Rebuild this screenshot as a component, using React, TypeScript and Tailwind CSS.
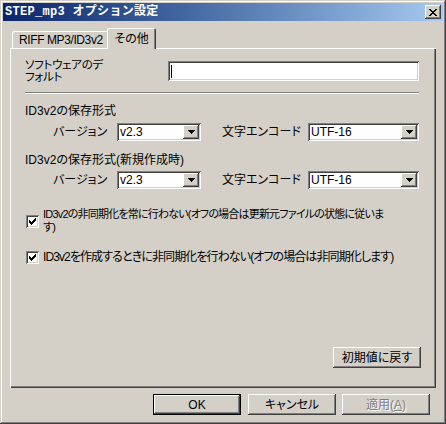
import React from "react";

// classic Win2000 bevels
const raised =
  "shadow-[inset_-1px_-1px_#404040,inset_1px_1px_#ffffff,inset_-2px_-2px_#808080,inset_2px_2px_#d4d0c8]";
const sunken =
  "shadow-[inset_1px_1px_#808080,inset_-1px_-1px_#ffffff,inset_2px_2px_#404040,inset_-2px_-2px_#d4d0c8]";

const CLOSE_X = [
  "##....##",
  ".##..##.",
  "..####..",
  "...##...",
  "..####..",
  ".##..##.",
  "##....##",
];
const ARROW = ["#######", ".#####.", "..###..", "...#..."];
const CHECK = [
  "......#",
  ".....##",
  "#...###",
  "##.###.",
  "#####..",
  ".###...",
  "..#....",
];

function Pixels({ rows, color = "#000" }: { rows: string[]; color?: string }) {
  const w = rows[0].length;
  const h = rows.length;
  return (
    <svg width={w} height={h} viewBox={`0 0 ${w} ${h}`} shapeRendering="crispEdges">
      {rows.map((row, y) =>
        row.split("").map((c, x) =>
          c === "#" ? <rect key={`${x}-${y}`} x={x} y={y} width={1} height={1} fill={color} /> : null
        )
      )}
    </svg>
  );
}

function Combo({ value, className }: { value: string; className: string }) {
  return (
    <div className={`relative h-[18px] bg-white ${sunken} ${className} flex items-center`}>
      <span className="pl-[3px]">{value}</span>
      <div
        className={`absolute right-[2px] top-[2px] w-[16px] h-[14px] bg-[#d4d0c8] ${raised} flex items-center justify-center`}
      >
        <Pixels rows={ARROW} />
      </div>
    </div>
  );
}

function Check({ children, textClass }: { children: React.ReactNode; textClass: string }) {
  return (
    <div className="flex items-center">
      <div className={`ml-px w-[13px] h-[13px] shrink-0 bg-white ${sunken} flex items-center justify-center`}>
        <Pixels rows={CHECK} />
      </div>
      <div className={`ml-[4px] whitespace-nowrap leading-[13px] ${textClass}`}>{children}</div>
    </div>
  );
}

function Button({ children, isDefault, className = "" }: { children: React.ReactNode; isDefault?: boolean; className?: string }) {
  if (isDefault) {
    return (
      <div className={`w-[88px] h-[21px] border border-black ${className}`}>
        <div className={`w-full h-full ${raised} flex items-center justify-center`}>{children}</div>
      </div>
    );
  }
  return (
    <div className={`w-[88px] h-[21px] ${raised} flex items-center justify-center ${className}`}>{children}</div>
  );
}

export default function App() {
  return (
    <div className="w-[446px] h-[424px] bg-[#d4d0c8] p-[3px] flex flex-col text-black text-[12px] leading-[12px] font-['Liberation_Sans','Noto_Sans_CJK_JP',sans-serif] [font-feature-settings:'palt'] shadow-[inset_-1px_-1px_#404040,inset_1px_1px_#d4d0c8,inset_-2px_-2px_#808080,inset_2px_2px_#ffffff]">
      {/* Title bar */}
      <div className="h-[18px] flex items-center pl-[2px] pr-[2px] bg-gradient-to-r from-[#0a246a] to-[#a6caf0]">
        <span className="text-white font-bold text-[12px] font-['Liberation_Mono','Noto_Sans_CJK_JP',monospace] [font-feature-settings:normal] tracking-[0.3px]">
          STEP_mp3 オプション設定
        </span>
        <div className={`ml-auto w-[16px] h-[14px] bg-[#d4d0c8] ${raised} flex items-center justify-center`}>
          <Pixels rows={CLOSE_X} />
        </div>
      </div>

      {/* Body */}
      <div className="flex-1 flex flex-col px-[7px] pt-[7px]">
        {/* Tabs */}
        <div className="h-[20px] flex items-end pl-[2px]">
          <div className="w-[97px] h-[17px] rounded-t-[2px] shadow-[inset_1px_1px_#ffffff,inset_-1px_0_#404040,inset_-2px_0_#808080] flex items-center pl-[7px] pt-px tracking-[-0.4px] whitespace-nowrap">
            RIFF MP3/ID3v2
          </div>
          <div className="relative z-10 -ml-[2px] -mb-px w-[49px] h-[21px] bg-[#d4d0c8] rounded-t-[2px] shadow-[inset_1px_1px_#ffffff,inset_-1px_0_#404040,inset_-2px_0_#808080] flex items-center justify-center">
            その他
          </div>
        </div>

        {/* Panel */}
        <div className="w-[426px] h-[340px] flex flex-col pl-[15px] pr-[17px] pt-[12px] pb-[20px] shadow-[inset_1px_1px_#ffffff,inset_-1px_-1px_#404040,inset_-2px_-2px_#808080]">
          <div className="flex h-[24px]">
            <div className="w-[143px] flex flex-col tracking-[-0.3px] text-[11.5px] leading-[11.5px]">
              <span className="h-[12px]">ソフトウェアのデ</span>
              <span className="h-[12px]">フォルト</span>
            </div>
            <div className={`flex-1 h-[20px] mt-px bg-white ${sunken} flex items-center`}>
              <div className="ml-[3px] w-px h-[13px] bg-black" />
            </div>
          </div>

          <div className="mt-[8px] h-[2px] border-t border-[#808080] border-b border-b-white" />

          <div className="mt-[11px] h-[12px]">ID3v2の保存形式</div>
          <div className="mt-[6px] flex items-center">
            <div className="w-[64px] pl-[28px] box-content">バージョン</div>
            <Combo value="v2.3" className="w-[84px]" />
            <div className="ml-[21px] w-[86px]">文字エンコード</div>
            <Combo value="UTF-16" className="flex-1" />
          </div>

          <div className="mt-[13px] h-[12px]">ID3v2の保存形式(新規作成時)</div>
          <div className="mt-[5px] flex items-center">
            <div className="w-[64px] pl-[28px] box-content">バージョン</div>
            <Combo value="v2.3" className="w-[84px]" />
            <div className="ml-[21px] w-[86px]">文字エンコード</div>
            <Combo value="UTF-16" className="flex-1" />
          </div>

          <div className="mt-[19px]">
            <Check textClass="text-[11px] tracking-[-0.8px]">
              ID3v2の非同期化を常に行わない(オフの場合は更新元ファイルの状態に従いま
              <br />
              す)
            </Check>
          </div>
          <div className="mt-[17px]">
            <Check textClass="tracking-[-0.9px]">
              ID3v2を作成するときに非同期化を行わない(オフの場合は非同期化します)
            </Check>
          </div>

          <Button className="mt-auto self-end -mr-[2px]">初期値に戻す</Button>
        </div>

        {/* Dialog buttons */}
        <div className="mt-[6px] flex justify-end gap-[6px] pr-[6px]">
          <Button isDefault className="mr-px">
            OK
          </Button>
          <Button>キャンセル</Button>
          <Button>
            <span className="text-[#808080] [text-shadow:1px_1px_0_#ffffff]">
              適用(<span className="underline">A</span>)
            </span>
          </Button>
        </div>
      </div>
    </div>
  );
}
